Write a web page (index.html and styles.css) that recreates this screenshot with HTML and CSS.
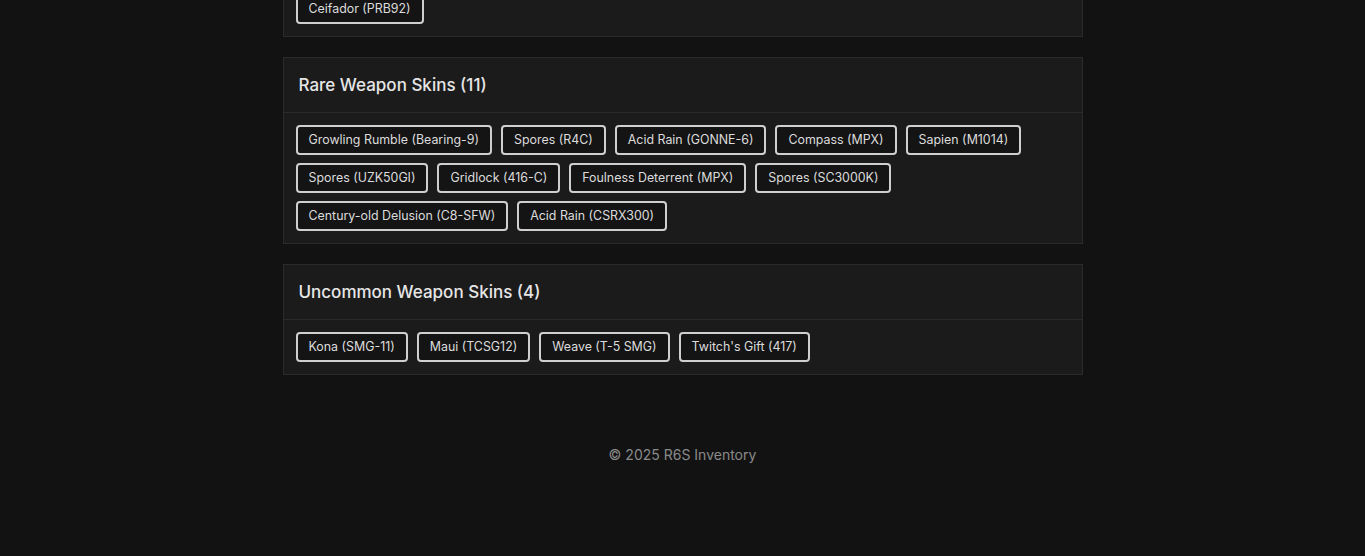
FILE: index.html
```html
<!DOCTYPE html>
<html lang="en">
<head>
<meta charset="utf-8">
<title>R6S Inventory</title>
<link rel="stylesheet" href="styles.css">
</head>
<body>
<main class="container">
  <section class="card card-first">
    <div class="card-header"><h2>Epic Weapon Skins (1)</h2></div>
    <div class="card-body">
      <span class="tag">Ceifador (PRB92)</span>
    </div>
  </section>

  <section class="card">
    <div class="card-header"><h2>Rare Weapon Skins (11)</h2></div>
    <div class="card-body">
      <span class="tag">Growling Rumble (Bearing-9)</span>
      <span class="tag">Spores (R4C)</span>
      <span class="tag">Acid Rain (GONNE-6)</span>
      <span class="tag">Compass (MPX)</span>
      <span class="tag">Sapien (M1014)</span>
      <span class="tag">Spores (UZK50GI)</span>
      <span class="tag">Gridlock (416-C)</span>
      <span class="tag">Foulness Deterrent (MPX)</span>
      <span class="tag">Spores (SC3000K)</span>
      <span class="tag">Century-old Delusion (C8-SFW)</span>
      <span class="tag">Acid Rain (CSRX300)</span>
    </div>
  </section>

  <section class="card">
    <div class="card-header"><h2>Uncommon Weapon Skins (4)</h2></div>
    <div class="card-body">
      <span class="tag">Kona (SMG-11)</span>
      <span class="tag">Maui (TCSG12)</span>
      <span class="tag">Weave (T-5 SMG)</span>
      <span class="tag">Twitch's Gift (417)</span>
    </div>
  </section>
</main>
<footer class="footer">© 2025 R6S Inventory</footer>
</body>
</html>
```
FILE: styles.css
```css
html, body {
  margin: 0;
  padding: 0;
  background: #121212;
  color: #e0e0e0;
  font-family: Inter, "Noto Sans", sans-serif;
}

.container {
  width: 800px;
  margin: 0 auto;
  display: flex;
  flex-direction: column;
  gap: 20px;
}

.card {
  background: #1b1b1b;
  border: 1px solid #2b2b2b;
}

.card-first {
  margin-top: -74px;
}

.card-header {
  padding: 16px 15px;
  border-bottom: 1px solid #2b2b2b;
}

.card-header h2 {
  margin: 0;
  font-size: 17px;
  line-height: 22px;
  font-weight: 500;
  color: #e6e6e6;
}

.card-body {
  padding: 12px;
  display: flex;
  flex-wrap: wrap;
  gap: 8px 9px;
}

.tag {
  display: inline-block;
  padding: 5px 11px;
  line-height: 16px;
  font-size: 12.4px;
  color: #dcdcdc;
  background: #141414;
  border: 2px solid #cfcfcf;
  border-radius: 4px;
}

.footer {
  margin-top: 70px;
  text-align: center;
  font-size: 14px;
  line-height: 20px;
  color: #8a8a8a;
}
```
